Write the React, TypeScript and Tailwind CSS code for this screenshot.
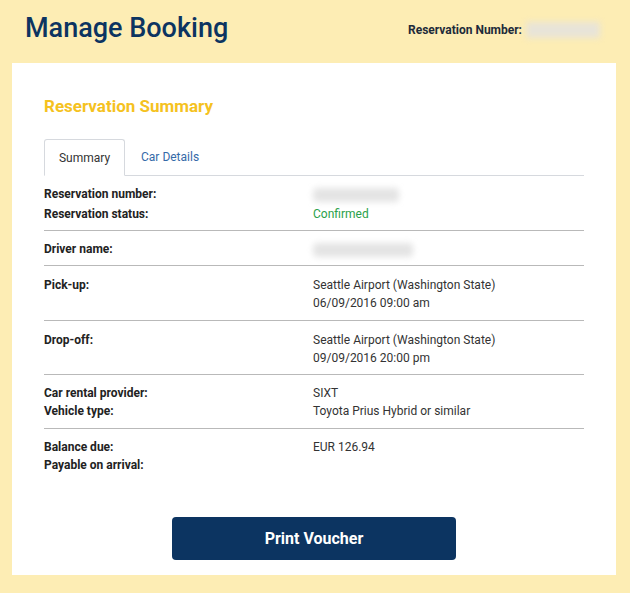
import React from "react";

const Blur = ({ w }: { w: string }) => (
  <span className={`inline-block h-[14px] ${w} rounded-sm bg-[#e4e4e4] blur-[3px] align-middle`} />
);

type Row = { labels: string[]; values: React.ReactNode[]; pad: string; lh?: string };

const rows: Row[] = [
  {
    labels: ["Reservation number:", "Reservation status:"],
    values: [<Blur w="w-[86px]" />, <span className="text-[#2aa14a]">Confirmed</span>],
    pad: "pt-[8px] pb-[6px]",
    lh: "h-[20px] leading-[20px]",
  },
  { labels: ["Driver name:"], values: [<Blur w="w-[100px]" />], pad: "pt-[9px] pb-[7px]" },
  {
    labels: ["Pick-up:"],
    values: ["Seattle Airport (Washington State)", "06/09/2016 09:00 am"],
    pad: "pt-[10px] pb-[8px]",
  },
  {
    labels: ["Drop-off:"],
    values: ["Seattle Airport (Washington State)", "09/09/2016 20:00 pm"],
    pad: "pt-[10px] pb-[7px]",
  },
  {
    labels: ["Car rental provider:", "Vehicle type:"],
    values: ["SIXT", "Toyota Prius Hybrid or similar"],
    pad: "pt-[9px] pb-[8px]",
  },
  {
    labels: ["Balance due:", "Payable on arrival:"],
    values: ["EUR 126.94"],
    pad: "pt-[9px]",
  },
];

export default function App() {
  return (
    <div className="min-h-[593px] w-[630px] bg-[#fdedb4] pb-[19px] font-['Roboto',sans-serif]">
      <div className="flex h-[63px] items-center justify-between pb-[6px] pl-[25px] pr-[30px]">
        <h1 className="text-[27px] font-medium leading-none text-[#0c3461]">Manage Booking</h1>
        <div className="flex items-center pt-[2px] text-[12px] font-bold text-[#1d2b3a]">
          Reservation Number:
          <span className="ml-[4px] inline-block h-[16px] w-[74px] bg-[#e8e4d8] blur-[3px]" />
        </div>
      </div>

      <div className="ml-[12px] mr-[14px] bg-white px-[32px] pb-[15px] pt-[32px]">
        <h2 className="text-[17px] font-bold leading-[22px] text-[#f5c21f]">Reservation Summary</h2>

        <div className="mt-[22px] flex border-b border-[#d6d9de] text-[12px]">
          <div className="-mb-px flex h-[37px] w-[81px] items-center justify-center rounded-t-[3px] border border-b-white border-[#d6d9de] bg-white text-[#333]">
            Summary
          </div>
          <div className="flex h-[36px] items-center pl-[16px] text-[#356aa8]">Car Details</div>
        </div>

        <div className="text-[12px] leading-[18px]">
          {rows.map((r, i) => (
            <div
              key={i}
              className={`flex ${r.pad} ${i < rows.length - 1 ? "border-b border-[#b9b9b9]" : ""}`}
            >
              <div className="w-[269px] font-bold text-[#222]">
                {r.labels.map((l) => (
                  <div key={l} className={r.lh ?? "h-[18px]"}>
                    {l}
                  </div>
                ))}
              </div>
              <div className="text-[#333]">
                {r.values.map((v, j) => (
                  <div key={j} className={r.lh ?? "h-[18px]"}>
                    {v}
                  </div>
                ))}
              </div>
            </div>
          ))}
        </div>

        <div className="mt-[43px] flex justify-center">
          <button className="h-[43px] w-[284px] rounded-[4px] bg-[#0c3461] text-[16px] font-bold text-white">
            Print Voucher
          </button>
        </div>
      </div>
    </div>
  );
}
